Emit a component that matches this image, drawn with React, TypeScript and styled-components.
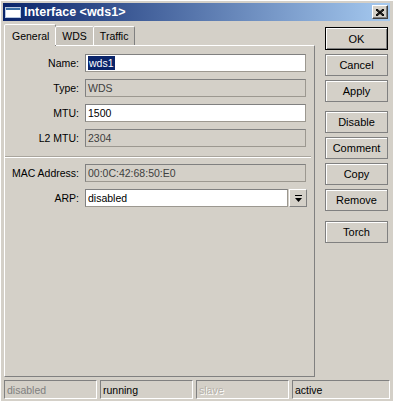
import { FC } from 'react';
import styled, { createGlobalStyle } from 'styled-components';

const GlobalStyle = createGlobalStyle`
  html, body {
    margin: 0;
    padding: 0;
    background: #d4d0c8;
  }
  * {
    box-sizing: border-box;
  }
`;

const Window = styled.div`
  width: 393px;
  height: 401px;
  background: #d4d0c8;
  border-left: 1px solid #fff;
  border-top: 1px solid #fff;
  padding: 2px 3px 0 2px;
  font-family: 'Liberation Sans', Arial, sans-serif;
  font-size: 10.5px;
  color: #000;
  display: flex;
  flex-direction: column;
`;

const TitleBar = styled.div`
  height: 18px;
  display: flex;
  align-items: center;
  padding: 0 2px 0 2px;
  background: linear-gradient(to right, #0a246a, #a6caf0);
`;

const TitleText = styled.span`
  flex: 1;
  margin-left: 3px;
  color: #fff;
  font-weight: bold;
  font-size: 12.5px;
  white-space: nowrap;
`;

const CloseButton = styled.div`
  width: 16px;
  height: 14px;
  background: #d4d0c8;
  border: 1px solid;
  border-color: #fff #404040 #404040 #fff;
  box-shadow: inset -1px -1px #808080;
  display: flex;
  align-items: center;
  justify-content: center;
`;

const Body = styled.div`
  display: flex;
  gap: 10px;
  padding: 3px 0 0 1px;
`;

const LeftCol = styled.div`
  width: 311px;
  display: flex;
  flex-direction: column;
`;

const Tabs = styled.div`
  display: flex;
  align-items: flex-end;
  height: 21px;
  position: relative;
  z-index: 1;
`;

const Tab = styled.div<{ $active?: boolean }>`
  height: ${(p) => (p.$active ? '22px' : '19px')};
  margin-bottom: ${(p) => (p.$active ? '-1px' : '0')};
  padding: ${(p) => (p.$active ? '0 6px 0 7px' : '0 6px 0 6px')};
  display: flex;
  align-items: center;
  background: ${(p) => (p.$active ? '#d4d0c8' : '#c9c5bd')};
  border: 1px solid;
  border-bottom: none;
  border-color: #fff #808080 transparent #fff;
  border-radius: 2px 2px 0 0;
  margin-left: ${(p) => (p.$active ? '0' : '-1px')};
`;

const Panel = styled.div`
  height: 332px;
  border: 1px solid;
  border-color: #fff #808080 #808080 #fff;
  padding: 8px 7px 0 0;
  display: flex;
  flex-direction: column;
`;

const Row = styled.div<{ $gap?: number }>`
  display: flex;
  align-items: center;
  height: 18px;
  margin-top: ${(p) => p.$gap ?? 0}px;
`;

const Label = styled.div`
  width: 75px;
  text-align: right;
  padding-right: 1px;
  margin-right: 5px;
  white-space: nowrap;
`;

const Field = styled.div<{ $readonly?: boolean; $width?: number }>`
  width: ${(p) => p.$width ?? 221}px;
  height: 18px;
  border: 1px solid;
  border-color: #808080 #9c9890 #9c9890 #808080;
  background: ${(p) => (p.$readonly ? '#d4d0c8' : '#fff')};
  color: ${(p) => (p.$readonly ? '#404040' : '#000')};
  padding-left: 2px;
  display: flex;
  align-items: center;
  white-space: nowrap;
`;

const Selected = styled.span`
  background: #0a246a;
  color: #fff;
  padding: 1px 1px;
`;

const Separator = styled.div`
  margin-top: 9px;
  width: 306px;
  height: 2px;
  border-top: 1px solid #a9a59d;
  border-bottom: 1px solid #fff;
`;

const DropButton = styled.div`
  width: 18px;
  height: 18px;
  margin-left: 1px;
  background: #d4d0c8;
  border: 1px solid;
  border-color: #fff #808080 #808080 #fff;
  display: flex;
  align-items: center;
  justify-content: center;
`;

const RightCol = styled.div`
  width: 63px;
  padding-top: 3px;
  display: flex;
  flex-direction: column;
`;

const Button = styled.div<{ $default?: boolean; $gap?: number }>`
  height: ${(p) => (p.$default ? '23px' : '22px')};
  margin-top: ${(p) => p.$gap ?? 4}px;
  background: #d4d0c8;
  border: 1px solid ${(p) => (p.$default ? '#000' : '#808080')};
  box-shadow: inset 1px 1px #fff, inset -1px -1px ${(p) => (p.$default ? '#808080' : '#d4d0c8')};
  display: flex;
  align-items: center;
  justify-content: center;
  font-size: 11px;
`;

const StatusBar = styled.div`
  display: flex;
  gap: 3px;
  margin-top: 3px;
  padding-left: 1px;
`;

const StatusCell = styled.div<{ $width: number; $tone: 'dim' | 'normal' | 'ghost' }>`
  width: ${(p) => p.$width}px;
  height: 19px;
  border: 1px solid;
  border-color: #808080 #fff #fff #808080;
  padding-left: 2px;
  display: flex;
  align-items: center;
  color: ${(p) => (p.$tone === 'normal' ? '#000' : p.$tone === 'dim' ? '#808080' : '#b4b0a8')};
  text-shadow: ${(p) => (p.$tone === 'ghost' ? '1px 1px #fff' : 'none')};
`;

const WinIcon: FC = () => (
  <svg width="16" height="11" viewBox="0 0 16 11">
    <rect x="0" y="0" width="16" height="11" fill="#fff" />
    <rect x="0" y="0" width="16" height="3" fill="#3a6ea5" />
    <rect x="0.5" y="0.5" width="15" height="10" fill="none" stroke="#b8c8e0" />
  </svg>
);

const CloseIcon: FC = () => (
  <svg width="8" height="7" viewBox="0 0 8 7">
    <path d="M0 0 L8 7 M1 0 L8 6 M0 1 L7 7 M8 0 L0 7 M7 0 L0 6 M8 1 L1 7" stroke="#000" strokeWidth="1" />
  </svg>
);

const DropIcon: FC = () => (
  <svg width="7" height="7" viewBox="0 0 7 7">
    <rect x="0" y="0" width="7" height="1" fill="#000" />
    <path d="M0 3 H7 L3.5 7 Z" fill="#000" />
  </svg>
);

const App: FC = () => {
  return (
    <Window>
      <GlobalStyle />
      <TitleBar>
        <WinIcon />
        <TitleText>Interface &lt;wds1&gt;</TitleText>
        <CloseButton>
          <CloseIcon />
        </CloseButton>
      </TitleBar>
      <Body>
        <LeftCol>
          <Tabs>
            <Tab $active>General</Tab>
            <Tab>WDS</Tab>
            <Tab>Traffic</Tab>
          </Tabs>
          <Panel>
            <Row>
              <Label>Name:</Label>
              <Field>
                <Selected>wds1</Selected>
              </Field>
            </Row>
            <Row $gap={7}>
              <Label>Type:</Label>
              <Field $readonly>WDS</Field>
            </Row>
            <Row $gap={7}>
              <Label>MTU:</Label>
              <Field>1500</Field>
            </Row>
            <Row $gap={7}>
              <Label>L2 MTU:</Label>
              <Field $readonly>2304</Field>
            </Row>
            <Separator />
            <Row $gap={6}>
              <Label>MAC Address:</Label>
              <Field $readonly>00:0C:42:68:50:E0</Field>
            </Row>
            <Row $gap={7}>
              <Label>ARP:</Label>
              <Field $width={203}>disabled</Field>
              <DropButton>
                <DropIcon />
              </DropButton>
            </Row>
          </Panel>
        </LeftCol>
        <RightCol>
          <Button $default $gap={0}>OK</Button>
          <Button>Cancel</Button>
          <Button>Apply</Button>
          <Button $gap={9}>Disable</Button>
          <Button>Comment</Button>
          <Button>Copy</Button>
          <Button>Remove</Button>
          <Button $gap={10}>Torch</Button>
        </RightCol>
      </Body>
      <StatusBar>
        <StatusCell $width={93} $tone="dim">disabled</StatusCell>
        <StatusCell $width={93} $tone="normal">running</StatusCell>
        <StatusCell $width={93} $tone="ghost">slave</StatusCell>
        <StatusCell $width={98} $tone="normal">active</StatusCell>
      </StatusBar>
    </Window>
  );
};

export default App;
